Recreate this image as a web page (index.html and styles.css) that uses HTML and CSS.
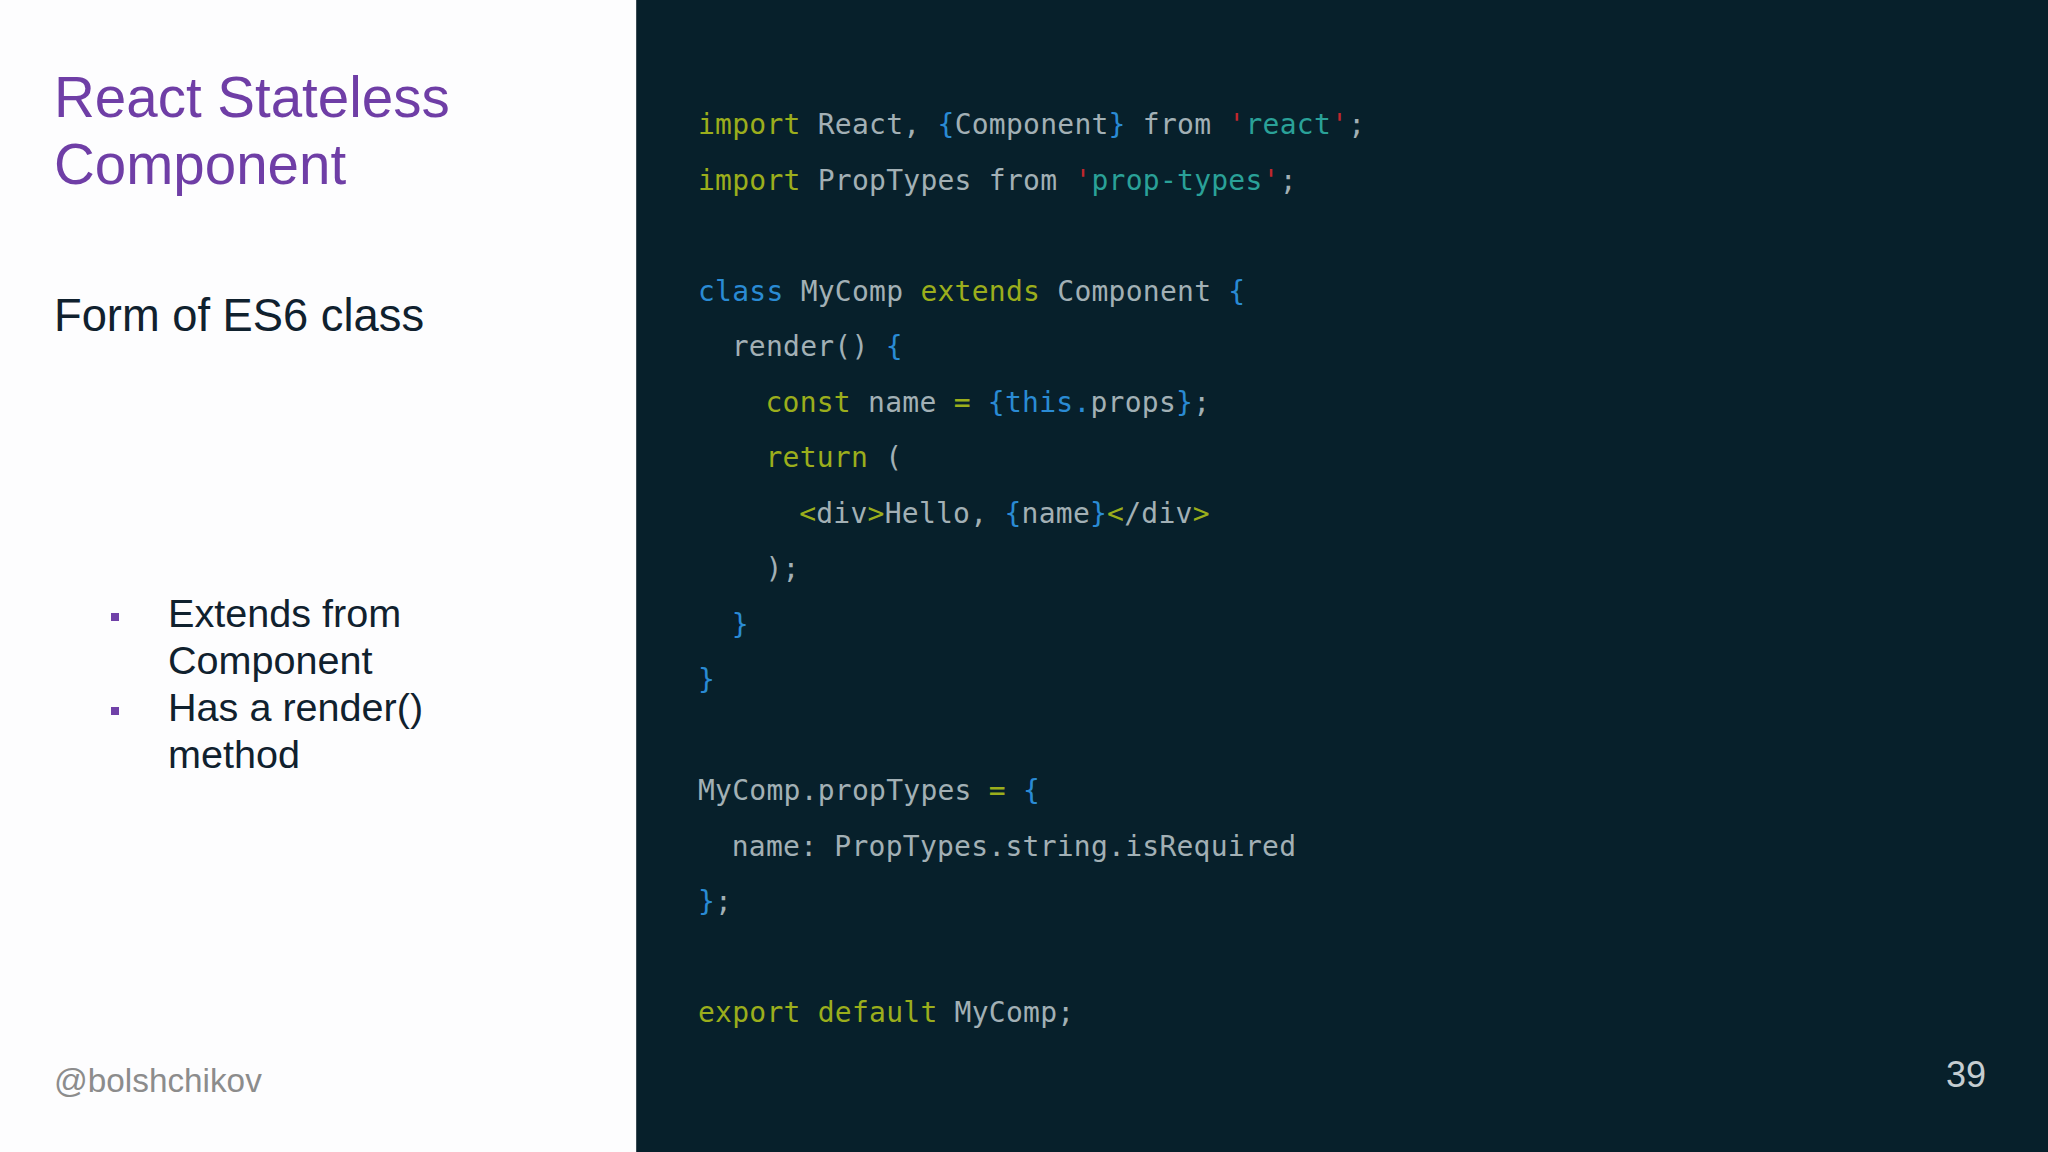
FILE: index.html
```html
<!DOCTYPE html>
<html lang="en">
<head>
<meta charset="utf-8">
<title>React Stateless Component</title>
<link rel="stylesheet" href="styles.css">
</head>
<body>
<div class="slide">
  <section class="info">
    <h1 class="title">React Stateless<br>Component</h1>
    <p class="subtitle">Form of ES6 class</p>
    <ul class="points">
      <li class="point"><span class="marker"></span><span class="point-text">Extends from Component</span></li>
      <li class="point"><span class="marker"></span><span class="point-text">Has a render() method</span></li>
    </ul>
    <div class="handle">@bolshchikov</div>
  </section>
  <section class="code-panel">
    <div class="code">
      <div class="line"><span class="k">import</span> React, <span class="b">{</span>Component<span class="b">}</span> from <span class="q">'</span><span class="s">react</span><span class="q">'</span>;</div>
      <div class="line"><span class="k">import</span> PropTypes from <span class="q">'</span><span class="s">prop-types</span><span class="q">'</span>;</div>
      <div class="line"></div>
      <div class="line"><span class="b">class</span> MyComp <span class="k">extends</span> Component <span class="b">{</span></div>
      <div class="line i1">render() <span class="b">{</span></div>
      <div class="line i2"><span class="k">const</span> name <span class="k">=</span> <span class="b">{this.</span>props<span class="b">}</span>;</div>
      <div class="line i2"><span class="k">return</span> (</div>
      <div class="line i3"><span class="k">&lt;</span>div<span class="k">&gt;</span>Hello, <span class="b">{</span>name<span class="b">}</span><span class="k">&lt;</span>/div<span class="k">&gt;</span></div>
      <div class="line i2">);</div>
      <div class="line i1"><span class="b">}</span></div>
      <div class="line"><span class="b">}</span></div>
      <div class="line"></div>
      <div class="line">MyComp.propTypes <span class="k">=</span> <span class="b">{</span></div>
      <div class="line i1">name: PropTypes.string.isRequired</div>
      <div class="line"><span class="b">}</span>;</div>
      <div class="line"></div>
      <div class="line"><span class="k">export default</span> MyComp;</div>
    </div>
    <div class="footer"><span class="page">39</span></div>
  </section>
</div>
</body>
</html>
```

FILE: styles.css
```css
html, body {
  margin: 0;
  padding: 0;
}

body {
  width: 2048px;
  height: 1152px;
  overflow: hidden;
  font-family: "Liberation Sans", Arial, Helvetica, sans-serif;
}

.slide {
  display: flex;
  width: 2048px;
  height: 1152px;
}

.info {
  width: 636px;
  flex: 0 0 636px;
  box-sizing: border-box;
  background: #fdfdfe;
  padding: 64px 0 51px 54px;
  display: flex;
  flex-direction: column;
}

.title {
  margin: 0;
  font-weight: normal;
  font-size: 56.5px;
  line-height: 67px;
  color: #6f3ea6;
}

.subtitle {
  margin: 91px 0 0;
  font-size: 45.3px;
  line-height: 54px;
  color: #10212e;
}

.points {
  list-style: none;
  margin: 247px 0 0;
  padding: 0;
}

.point {
  display: flex;
  align-items: flex-start;
  font-size: 39.6px;
  line-height: 47px;
  color: #10212e;
}

.marker {
  flex: 0 0 8px;
  width: 8px;
  height: 8px;
  margin: 23px 49px 0 57px;
  background: #7041a8;
}

.point-text {
  width: 300px;
}

.handle {
  margin-top: auto;
  font-size: 33.3px;
  line-height: 40px;
  color: #8c8c8c;
}

.code-panel {
  flex: 1 1 auto;
  background: #07202b;
  border-left: 1px solid #3a4a52;
  box-sizing: border-box;
  padding: 97px 62px 57px 61px;
  display: flex;
  flex-direction: column;
}

.code {
  display: flex;
  flex-direction: column;
  font-family: "DejaVu Sans Mono", "Liberation Mono", monospace;
  font-size: 28px;
  letter-spacing: 0.25px;
  line-height: 55.5px;
  color: #a2b0b5;
}

.line {
  height: 55.5px;
  white-space: pre;
}

.i1 { padding-left: 2ch; }
.i2 { padding-left: 4ch; }
.i3 { padding-left: 6ch; }

.k { color: #9bae1c; }
.b { color: #2a8bd4; }
.s { color: #2aa198; }
.q { color: #c0272d; }

.footer {
  margin-top: auto;
  display: flex;
  justify-content: flex-end;
}

.page {
  font-size: 36px;
  line-height: 40px;
  color: #c5cdd1;
}
```
